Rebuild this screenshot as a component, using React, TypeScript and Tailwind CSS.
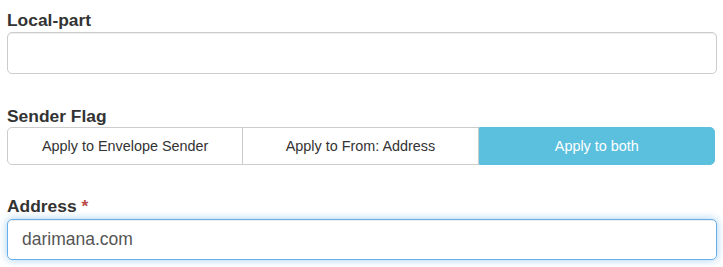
import React from "react";

export default function App() {
  const font = { fontFamily: '"Liberation Sans", Arial, sans-serif' };
  return (
    <div className="w-[723px] h-[267px] bg-white overflow-hidden" style={font}>
      <div className="pl-[7px] pt-[10px] w-[717px]">
        <label className="block text-[17.4px] leading-[20px] font-bold text-[#333] mb-[2px]">Local-part</label>
        <input
          className="block w-[710px] h-[42px] border border-[#ccc] rounded-[5px] px-[14px] text-[17.5px] text-[#555] outline-none shadow-[inset_0_1px_1px_rgba(0,0,0,0.075)]"
          style={font}
        />
        <label className="block mt-[32px] text-[17.4px] leading-[20px] font-bold text-[#333] mb-[1px]">Sender Flag</label>
        <div className="flex w-[708px] h-[38px] text-[14.4px]">
          <div className="flex-1 flex items-center justify-center pt-[2px] border border-[#ccc] rounded-l-[5px] text-[#333]">
            Apply to Envelope Sender
          </div>
          <div className="flex-1 flex items-center justify-center pt-[2px] border-y border-r border-[#ccc] text-[#333]">
            Apply to From: Address
          </div>
          <div className="flex-1 flex items-center justify-center pt-[2px] bg-[#5bc0de] border border-[#5bc0de] rounded-r-[5px] text-white">
            Apply to both
          </div>
        </div>
        <label className="block mt-[31px] text-[17.4px] leading-[20px] font-bold text-[#333] mb-[3px]">
          Address <span className="text-[#b94a48]">*</span>
        </label>
        <input
          defaultValue="darimana.com"
          className="block w-[710px] h-[41px] border border-[#66afe9] rounded-[5px] px-[14px] text-[17.5px] text-[#555] outline-none shadow-[inset_0_1px_1px_rgba(0,0,0,0.075),0_0_8px_rgba(102,175,233,0.6)]"
          style={font}
        />
      </div>
    </div>
  );
}
